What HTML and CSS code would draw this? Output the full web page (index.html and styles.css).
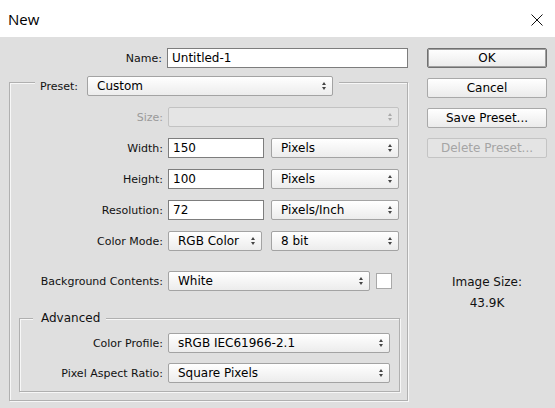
FILE: index.html
```html
<!DOCTYPE html>
<html lang="en">
<head>
  <meta charset="UTF-8" />
  <title>New</title>
  <link rel="stylesheet" href="styles.css">
</head>
<body>
  <div class="title-bar">
    <span class="title">New</span>
    <svg class="close" width="12" height="12" viewBox="0 0 12 12">
      <path d="M0.5 0.5 L11.5 11.5 M11.5 0.5 L0.5 11.5" stroke="#111" stroke-width="1" fill="none" />
    </svg>
  </div>

  <div class="dialog">
    <div class="main">
      <div class="row">
        <label class="label name-label">Name:</label>
        <input class="field name-field" type="text" value="Untitled-1" />
      </div>

      <div class="group outer">
        <div class="group-head preset-head">
          <span class="preset-label">Preset:</span>
          <div class="select preset-select">Custom<span class="arrows"></span></div>
        </div>

        <div class="row size-row">
          <span class="label disabled">Size:</span>
          <div class="select select-disabled wide"><span class="arrows"></span></div>
        </div>
        <div class="row">
          <span class="label">Width:</span>
          <input class="field num" type="text" value="150" />
          <div class="select unit">Pixels<span class="arrows"></span></div>
        </div>
        <div class="row">
          <span class="label">Height:</span>
          <input class="field num" type="text" value="100" />
          <div class="select unit">Pixels<span class="arrows"></span></div>
        </div>
        <div class="row">
          <span class="label">Resolution:</span>
          <input class="field num" type="text" value="72" />
          <div class="select unit">Pixels/Inch<span class="arrows"></span></div>
        </div>
        <div class="row">
          <span class="label">Color Mode:</span>
          <div class="select mode">RGB Color<span class="arrows"></span></div>
          <div class="select unit">8 bit<span class="arrows"></span></div>
        </div>
        <div class="row bg-row">
          <span class="label">Background Contents:</span>
          <div class="select bg-select">White<span class="arrows"></span></div>
          <span class="swatch"></span>
        </div>

        <div class="group inner">
          <div class="group-head advanced-head">Advanced</div>
          <div class="row profile-row">
            <span class="label">Color Profile:</span>
            <div class="select profile">sRGB IEC61966-2.1<span class="arrows"></span></div>
          </div>
          <div class="row">
            <span class="label">Pixel Aspect Ratio:</span>
            <div class="select profile">Square Pixels<span class="arrows"></span></div>
          </div>
        </div>
      </div>
    </div>

    <div class="side">
      <button class="btn btn-default">OK</button>
      <button class="btn">Cancel</button>
      <button class="btn">Save Preset...</button>
      <button class="btn" disabled>Delete Preset...</button>

      <div class="image-size">
        <div>Image Size:</div>
        <div class="size-value">43.9K</div>
      </div>
    </div>
  </div>
</body>
</html>
```

FILE: styles.css
```css
body {
  margin: 0;
  background-color: #dfdfdf;
  font-family: 'DejaVu Sans', Tahoma, sans-serif;
  font-size: 11px;
  color: #111;
  height: 408px;
  overflow: hidden;
}

/* Window caption */
.title-bar {
  height: 37px;
  background-color: #fff;
  display: flex;
  align-items: center;
  justify-content: space-between;
  padding: 0 12px 0 8px;
}
.title {
  font-family: 'Open Sans', 'Noto Sans', sans-serif;
  font-size: 15px;
  color: #000;
}
.close {
  display: block;
  margin-top: 2px;
}

.dialog {
  display: flex;
  padding-top: 11px;
}

.main {
  width: 400px;
  padding-left: 9px;
}

.row {
  display: flex;
  align-items: center;
  height: 20px;
  margin-top: 11px;
}
.name-label {
  width: 154px;
}
.row:first-child {
  margin-top: 0;
}

.label {
  width: 153px;
  margin-right: 5px;
  text-align: right;
  white-space: nowrap;
}
.label.disabled {
  color: #9a9a9a;
}

/* Text fields */
.field {
  box-sizing: border-box;
  height: 20px;
  border: 1px solid #7d7d7d;
  background: #fff;
  font-family: inherit;
  font-size: 12px;
  color: #000;
  padding: 0 4px;
  margin: 0;
  outline: none;
}
.name-field {
  width: 241px;
}
.num {
  width: 96px;
  margin-right: 7px;
}

/* Drop-down lists */
.select {
  box-sizing: border-box;
  position: relative;
  height: 20px;
  line-height: 18px;
  border: 1px solid #a3a3a3;
  border-radius: 2px;
  background: linear-gradient(#ffffff, #ececec);
  padding-left: 9px;
  font-size: 12px;
  color: #000;
  white-space: nowrap;
}
.select .arrows {
  position: absolute;
  right: 5px;
  top: 5px;
  width: 5px;
  height: 8px;
}
.select .arrows::before,
.select .arrows::after {
  content: "";
  position: absolute;
  left: 0;
  border-left: 2.5px solid transparent;
  border-right: 2.5px solid transparent;
}
.select .arrows::before {
  top: 0;
  border-bottom: 3px solid #444;
}
.select .arrows::after {
  bottom: 0;
  border-top: 3px solid #444;
}
.select-disabled {
  background: #e5e5e5;
  border-color: #c2c2c2;
}
.select-disabled .arrows::before {
  border-bottom-color: #aaa;
}
.select-disabled .arrows::after {
  border-top-color: #aaa;
}

.wide { width: 231px; }
.unit { width: 128px; }
.mode { width: 94px; margin-right: 9px; }
.bg-select { width: 202px; }
.profile { width: 222px; }

.swatch {
  width: 14px;
  height: 14px;
  margin-left: 6px;
  border: 1px solid #a9a9a9;
  background: #fff;
}

/* Etched group boxes */
.group {
  border: 1px solid #b0b0b0;
  box-shadow: inset 1px 1px #f7f7f7, 1px 1px #f7f7f7;
}
.outer {
  box-sizing: border-box;
  width: 399px;
  margin-top: 14px;
  padding-bottom: 8px;
}
.inner {
  box-sizing: border-box;
  width: 381px;
  margin: 27px 0 0 9px;
  padding-bottom: 8px;
}
.inner .label {
  width: 143px;
}

.group-head {
  background-color: #dfdfdf;
  width: fit-content;
}
.preset-head {
  display: flex;
  align-items: center;
  height: 20px;
  margin: -7px 0 0 25px;
  padding: 0 6px 0 5px;
}
.preset-label {
  width: 47px;
}
.preset-select {
  width: 246px;
}
.advanced-head {
  line-height: 14px;
  margin: -8px 0 0 13px;
  padding: 0 6px 0 8px;
  font-size: 12px;
}
.profile-row {
  margin-top: 8px;
}
.inner .row + .row {
  margin-top: 10px;
}
.bg-row {
  margin-top: 20px;
}

/* Right column */
.side {
  margin-left: 18px;
  width: 120px;
  display: flex;
  flex-direction: column;
  gap: 10px;
}
.btn {
  height: 20px;
  border: 1px solid #a9a9a9;
  border-radius: 2px;
  background: linear-gradient(#ffffff, #ebebeb);
  font-family: inherit;
  font-size: 12px;
  color: #000;
  padding: 0;
}
.btn-default {
  border-color: #707070;
  box-shadow: inset 0 0 0 1px #a0a0a0;
}
.btn:disabled {
  color: #a5a5a5;
  border-color: #c4c4c4;
  background: #e4e4e4;
}

.image-size {
  margin-top: 107px;
  text-align: center;
  font-size: 12px;
}
.size-value {
  margin-top: 7px;
}
```
